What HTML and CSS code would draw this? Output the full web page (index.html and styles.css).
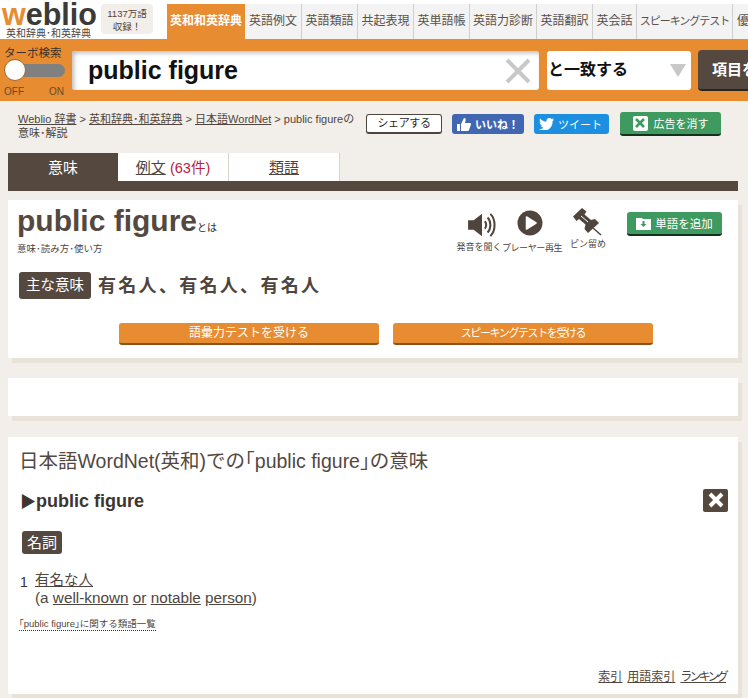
FILE: index.html
```html
<!DOCTYPE html>
<html lang="ja">

<head>
    <meta charset="UTF-8" />
    <title>public figureとは 意味・読み方・使い方</title>
    <link rel="stylesheet" href="styles.css">
</head>

<body>
    <div class="top-row">
        <div class="logo">
            <div class="logo-mark"><span class="logo-w">w</span>eblio</div>
            <div class="logo-sub">英和辞典･和英辞典</div>
        </div>
        <div class="word-count">1137万語<br>収録！</div>
        <nav class="nav-tabs">
            <a class="nav-tab active w78">英和和英辞典</a>
            <a class="nav-tab w57">英語例文</a>
            <a class="nav-tab w56">英語類語</a>
            <a class="nav-tab w56">共起表現</a>
            <a class="nav-tab w56">英単語帳</a>
            <a class="nav-tab w67">英語力診断</a>
            <a class="nav-tab w56">英語翻訳</a>
            <a class="nav-tab w44">英会話</a>
            <a class="nav-tab w96 narrow">スピーキングテスト</a>
            <a class="nav-tab w56 last">優良</a>
        </nav>
    </div>

    <div class="search-bar">
        <div class="turbo">
            <div class="turbo-title">ターボ検索</div>
            <div class="turbo-track"><span class="turbo-knob"></span></div>
            <div class="turbo-labels"><span>OFF</span><span>ON</span></div>
        </div>
        <div class="search-box">
            <span class="search-text">public figure</span>
            <svg class="search-clear" width="26" height="26" viewBox="0 0 26 26">
                <path d="M2 2 L24 24 M24 2 L2 24" stroke="#c8c8c8" stroke-width="4" />
            </svg>
        </div>
        <div class="search-select">
            <span class="select-text">と一致する</span>
            <span class="select-arrow"></span>
        </div>
        <div class="search-btn">項目を検索</div>
    </div>

    <div class="crumb-row">
        <div class="crumbs">
            <a>Weblio 辞書</a> &gt; <a>英和辞典･和英辞典</a> &gt; <a>日本語WordNet</a> &gt; public figureの<br>意味･解説
        </div>
        <a class="btn-share">シェアする</a>
        <a class="btn-social btn-like">
            <svg width="14" height="13" viewBox="0 0 14 13">
                <path fill="#fff" d="M0 6h3v7H0z M4 6 L7 0 C8.5 0 9 1.2 8.6 2.5 L8 5 H13 C14 5 14.2 6 13.8 7 L12 12 C11.8 12.7 11.3 13 10.5 13 H4z" />
            </svg>
            <b>いいね！</b>
        </a>
        <a class="btn-social btn-tweet">
            <svg width="15" height="12" viewBox="0 0 15 12">
                <path fill="#fff" d="M15 1.5 C14.4 1.8 13.9 1.9 13.3 2 C13.9 1.6 14.4 1 14.6 .3 C14 .7 13.4 .9 12.7 1 C11.4 -.4 9 -.3 8 1.2 C7.4 2 7.3 2.9 7.5 3.7 C5 3.6 2.700 2.400 1.100 .5 C.2 2 .7 3.800 2 4.700 C1.500 4.700 1 4.600 .6 4.300 C.6 5.900 1.700 7.200 3.100 7.500 C2.700 7.700 2.200 7.700 1.700 7.600 C2.100 8.900 3.300 9.800 4.700 9.800 C3.300 10.900 1.600 11.400 0 11.200 C6.500 14.800 14 10.800 13.500 3.200 C14.100 2.800 14.600 2.200 15 1.500z" />
            </svg>
            <span>ツイート</span>
        </a>
        <a class="btn-green btn-noad">
            <span class="noad-icon">
                <svg width="10" height="10" viewBox="0 0 10 10">
                    <path d="M1 1 L9 9 M9 1 L1 9" stroke="#3f9a5f" stroke-width="2.600" />
                </svg>
            </span>
            広告を消す
        </a>
    </div>

    <div class="page-tabs">
        <a class="page-tab current">意味</a>
        <a class="page-tab"><u>例文</u> <span class="count">(63件)</span></a>
        <a class="page-tab"><u>類語</u></a>
    </div>
    <div class="page-tabs-line"></div>

    <section class="card card-main">
        <div class="main-top">
            <div class="title-area">
                <h1><span class="title-word">public figure</span><span class="title-towa">とは</span></h1>
                <div class="title-sub">意味･読み方･使い方</div>
            </div>
            <div class="tools">
                <div class="tool tool-sound">
                    <svg width="30" height="26" viewBox="0 0 32 28">
                        <path fill="#4f453d" d="M1 9h6l9-7v24l-9-7H1z" />
                        <path fill="none" stroke="#4f453d" stroke-width="2.200" d="M19 10 C21 12 21 16 19 18 M22 6 C26 10 26 18 22 22 M25 2 C31 8 31 20 25 26" />
                    </svg>
                    <span>発音を聞く</span>
                </div>
                <div class="tool tool-play">
                    <svg width="26" height="26" viewBox="0 0 26 26">
                        <circle cx="13" cy="13" r="12.500" fill="#4f453d" />
                        <path fill="#fff" stroke="#fff" stroke-width="1.500" stroke-linejoin="round" d="M9.500 7 L19 13 L9.500 19z" />
                    </svg>
                    <span class="tool-play-text">プレーヤー再生</span>
                </div>
                <div class="tool tool-pin">
                    <svg width="30" height="28" viewBox="0 0 30 28">
                        <path fill="#4f453d" d="M9 0 L13.500 3.500 L11.500 6.500 L18 12 L22 11 L26 15 L15 25 L11.500 21 L12.500 16.500 L6 11 L3.500 13 L0 8.500z" />
                        <path stroke="#fff" stroke-width="1" d="M8 8 L15 14" />
                        <path stroke="#4f453d" stroke-width="1.500" d="M20 20 L28 27" />
                    </svg>
                    <span>ピン留め</span>
                </div>
            </div>
            <a class="btn-green btn-addword">
                <svg width="15" height="13" viewBox="0 0 15 13">
                    <path fill="#fff" d="M0 1h6l1 1h8v11H0z" />
                    <path fill="#3f9a5f" d="M6.500 4h2v3h2l-3 3-3-3h2z" />
                </svg>
                単語を追加
            </a>
        </div>
        <div class="meaning-row">
            <span class="label">主な意味</span>
            <span class="meaning-text">有名人、有名人、有名人</span>
        </div>
        <div class="test-row">
            <a class="btn-orange">語彙力テストを受ける</a>
            <a class="btn-orange btn-kana">スピーキングテストを受ける</a>
        </div>
    </section>

    <section class="card card-ad"></section>

    <section class="card card-wordnet">
        <h2>日本語WordNet(英和)での｢public figure｣の意味</h2>
        <div class="entry-head">
            <span class="entry-title"><span class="entry-mark">▶</span>public figure</span>
            <span class="close-box">
                <svg width="16" height="16" viewBox="0 0 16 16">
                    <path d="M2 2 L14 14 M14 2 L2 14" stroke="#fff" stroke-width="4" />
                </svg>
            </span>
        </div>
        <span class="label label-pos">名詞</span>
        <div class="sense">
            <span class="sense-num">1</span>
            <div class="sense-body">
                <div class="sense-ja"><a>有名な人</a></div>
                <div class="sense-en">(a <a>well-known</a> <a>or</a> <a>notable</a> <a>person</a>)</div>
            </div>
        </div>
        <a class="related">｢public figure｣に関する類語一覧</a>
        <div class="card-links">
            <a>索引</a>
            <a>用語索引</a>
            <a class="link-kana">ランキング</a>
        </div>
    </section>
</body>

</html>
```
FILE: styles.css
```css
html,
body {
    margin: 0;
    height: 698px;
    overflow: hidden;
}

body {
    width: 748px;
    background-color: #f2eee9;
    color: #4f453d;
    font-family: "Liberation Sans", Arial, "Noto Sans CJK JP", sans-serif;
    font-size: 13px;
}

a {
    color: inherit;
}

.top-row {
    display: flex;
    height: 39px;
    background-color: #fff;
}

.logo {
    width: 101px;
    flex: none;
    padding-left: 2px;
    box-sizing: border-box;
}

.logo-mark {
    height: 27px;
    padding-top: 1px;
    box-sizing: border-box;
    font-size: 30.500px;
    line-height: 26px;
    font-weight: bold;
    color: #3c3a38;
}

.logo-w {
    color: #e78c31;
}

.logo-sub {
    font-size: 10px;
    line-height: 12px;
    padding-left: 4px;
    margin-top: 1px;
    white-space: nowrap;
}

.word-count {
    width: 52px;
    height: 30px;
    flex: none;
    margin-top: 4px;
    background-color: #f2eee9;
    border-radius: 4px;
    font-size: 9.500px;
    line-height: 13px;
    padding-top: 3px;
    box-sizing: border-box;
    text-align: center;
}

.nav-tabs {
    display: flex;
    width: 581px;
    margin: 4px 0 0 14px;
    flex: none;
    overflow: hidden;
}

.nav-tab {
    height: 35px;
    line-height: 35px;
    background-color: #f3f3f3;
    border-right: 1px solid #cfcfcf;
    box-sizing: border-box;
    text-align: center;
    font-size: 12px;
    color: #58514a;
    white-space: nowrap;
    flex: none;
}

.nav-tab.active {
    background-color: #e78c31;
    color: #fff;
    font-weight: bold;
    border-right: none;
}

.nav-tab.narrow {
    font-size: 11px;
    letter-spacing: -1px;
}

.nav-tab.last {
    width: 15px;
    text-align: left;
    padding-left: 4px;
    border-right: none;
    overflow: hidden;
}

.w44 { width: 44px; }
.w56 { width: 56px; }
.w57 { width: 57px; }
.w67 { width: 67px; }
.w78 { width: 78px; }
.w96 { width: 96px; }

.search-bar {
    display: flex;
    height: 62px;
    background-color: #e78c31;
    overflow: hidden;
    box-sizing: border-box;
}

.turbo {
    width: 72px;
    flex: none;
    padding: 7px 0 0 4px;
    box-sizing: border-box;
    color: #3a312a;
}

.turbo-title {
    font-size: 11.500px;
    line-height: 14px;
    white-space: nowrap;
}

.turbo-track {
    position: relative;
    width: 60px;
    height: 13px;
    margin: 4px 0 0 1px;
    background-color: #808080;
    border-radius: 7px;
}

.turbo-knob {
    position: absolute;
    left: -1px;
    top: -5px;
    width: 22px;
    height: 22px;
    background-color: #fff;
    border-radius: 50%;
    border: 1px solid #a36328;
    box-sizing: border-box;
}

.turbo-labels {
    display: flex;
    justify-content: space-between;
    width: 60px;
    margin-top: 9px;
    font-size: 10px;
    line-height: 12px;
    color: #6b4a22;
}

.search-box {
    display: flex;
    align-items: center;
    justify-content: space-between;
    width: 467px;
    height: 39px;
    margin-top: 12px;
    padding: 0 8px 0 16px;
    background-color: #fff;
    border-radius: 3px;
    box-shadow: inset 2px 2px 4px #bbb;
    box-sizing: border-box;
    flex: none;
}

.search-text {
    font-size: 25px;
    font-weight: bold;
    color: #111;
}

.search-select {
    display: flex;
    align-items: center;
    justify-content: space-between;
    width: 144px;
    height: 39px;
    margin: 12px 0 0 8px;
    padding: 0 5px 0 1px;
    background-color: #fff;
    border-radius: 3px;
    box-sizing: border-box;
    font-size: 16px;
    font-weight: bold;
    color: #111;
    flex: none;
}

.select-text {
    padding-bottom: 5px;
}

.select-arrow {
    width: 0;
    height: 0;
    border-left: 8px solid transparent;
    border-right: 8px solid transparent;
    border-top: 13px solid #c8c8c8;
}

.search-btn {
    width: 120px;
    height: 41px;
    margin: 11px 0 0 7px;
    padding-left: 14px;
    line-height: 39px;
    background-color: #54483f;
    border-bottom: 2px solid #2d241d;
    border-radius: 4px;
    box-sizing: border-box;
    color: #fff;
    font-size: 15px;
    font-weight: bold;
    white-space: nowrap;
    flex: none;
}

.crumb-row {
    display: flex;
    align-items: flex-start;
    height: 52px;
    padding: 11px 0 0 18px;
    box-sizing: border-box;
}

.crumbs {
    width: 340px;
    flex: none;
    font-size: 11px;
    line-height: 14px;
    color: #4f453d;
    white-space: nowrap;
}

.crumbs a {
    text-decoration: underline;
}

.btn-share {
    width: 76px;
    height: 20px;
    margin: 2px 0 0 8px;
    border: 1px solid #4f453d;
    border-bottom-width: 2px;
    border-radius: 3px;
    background-color: #fff;
    box-sizing: border-box;
    text-align: center;
    font-size: 11px;
    letter-spacing: -0.4px;
    line-height: 17px;
    color: #2e2924;
    flex: none;
}

.btn-social {
    display: flex;
    align-items: center;
    justify-content: center;
    gap: 4px;
    height: 20px;
    margin-top: 2px;
    border-radius: 3px;
    color: #fff;
    font-size: 11px;
    box-sizing: border-box;
    flex: none;
}

.btn-like {
    width: 72px;
    margin-left: 10px;
    background-color: #4267b2;
}

.btn-tweet {
    width: 75px;
    margin-left: 10px;
    padding-right: 2px;
    background-color: #1d8fe1;
}

.btn-green {
    display: flex;
    align-items: center;
    justify-content: center;
    background-color: #3f9a5f;
    border-bottom: 2px solid #16301f;
    border-radius: 3px;
    box-sizing: border-box;
    color: #fff;
    flex: none;
}

.btn-noad {
    gap: 6px;
    width: 101px;
    height: 24px;
    margin: 0 0 0 11px;
    font-size: 11px;
}

.noad-icon {
    display: flex;
    align-items: center;
    justify-content: center;
    width: 15px;
    height: 15px;
    background-color: #fff;
    border-radius: 2px;
}

.page-tabs {
    display: flex;
    height: 28px;
    margin-left: 8px;
}

.page-tab {
    width: 111px;
    height: 28px;
    line-height: 30px;
    background-color: #fff;
    border-right: 1px solid #d8d3cd;
    box-sizing: border-box;
    text-align: center;
    font-size: 15px;
}

.page-tab.current {
    width: 110px;
    background-color: #54483f;
    color: #fff;
    border-right: none;
}

.count {
    color: #b8203c;
    font-size: 14.500px;
}

.page-tabs-line {
    width: 730px;
    height: 10px;
    margin-left: 8px;
    background-color: #54483f;
}

.card {
    width: 730px;
    margin: 9px 0 0 8px;
    background-color: #fff;
    box-shadow: 4px 5px 0 #e8e2d8;
    box-sizing: border-box;
}

.card-main {
    height: 158px;
    padding: 0 9px;
}

.main-top {
    display: flex;
    height: 66px;
}

.title-area {
    width: 439px;
    flex: none;
}

h1 {
    margin: 3px 0 0;
    font-size: 30px;
    line-height: 36px;
    font-weight: bold;
    color: #54483f;
    white-space: nowrap;
}

.title-towa {
    font-size: 10px;
    font-weight: normal;
    color: #2e2924;
}

.title-sub {
    margin-top: -3px;
    font-size: 9.500px;
    line-height: 12px;
}

.tools {
    display: flex;
    width: 158px;
    flex: none;
    font-size: 9px;
    white-space: nowrap;
}

.tool {
    display: flex;
    flex-direction: column;
    align-items: center;
    gap: 2px;
}

.tool span {
    line-height: 12px;
}

.tool-sound {
    width: 46px;
    padding-top: 12px;
    gap: 3px;
}

.tool-sound svg {
    margin-left: 6px;
}

.tool-play {
    width: 60px;
    padding-top: 10px;
    gap: 6px;
}

.tool-play svg {
    margin-right: 4px;
}

.tool-play-text {
    letter-spacing: -0.4px;
}

.tool-pin {
    width: 52px;
    padding-top: 8px;
}

.btn-addword {
    gap: 4px;
    width: 95px;
    height: 24px;
    margin: 12px 0 0 13px;
    font-size: 11.500px;
}

.meaning-row {
    display: flex;
    align-items: center;
    gap: 7px;
    margin: 6px 0 0 2px;
}

.label {
    display: inline-block;
    background-color: #54483f;
    border-radius: 3px;
    color: #fff;
    text-align: center;
}

.meaning-row .label {
    width: 72px;
    height: 27px;
    line-height: 27px;
    font-size: 14.500px;
}

.meaning-text {
    margin-top: -4px;
    font-size: 18px;
    font-weight: bold;
    letter-spacing: 2.3px;
    color: #4f453d;
}

.test-row {
    display: flex;
    gap: 14px;
    margin: 24px 0 0 102px;
}

.btn-orange {
    width: 260px;
    height: 22px;
    background-color: #e78c31;
    border-bottom: 2px solid #8a5418;
    border-radius: 3px;
    box-sizing: border-box;
    text-align: center;
    color: #fff;
    font-size: 12px;
    line-height: 20px;
}

.btn-kana {
    font-size: 11px;
    letter-spacing: -1.4px;
}

.card-ad {
    height: 38px;
    margin-top: 20px;
}

.card-wordnet {
    position: relative;
    height: 257px;
    margin-top: 21px;
    padding: 12px 12px 0 12px;
}

h2 {
    margin: 0 0 0 -1px;
    font-size: 19.500px;
    line-height: 24px;
    font-weight: normal;
    color: #54483f;
    white-space: nowrap;
}

.entry-head {
    display: flex;
    align-items: center;
    justify-content: space-between;
    height: 24px;
    margin-top: 15px;
    margin-left: 2px;
}

.entry-title {
    font-size: 18px;
    font-weight: bold;
    color: #3c3530;
}

.entry-mark {
    margin-left: -2px;
    font-size: 16px;
}

.close-box {
    display: flex;
    align-items: center;
    justify-content: center;
    width: 25px;
    height: 23px;
    margin-right: -2px;
    background-color: #54483f;
    border-radius: 2px;
}

.label-pos {
    display: block;
    width: 40px;
    height: 23px;
    line-height: 23px;
    margin: 19px 0 0 2px;
    font-size: 15px;
}

.sense {
    display: flex;
    margin-top: 17px;
}

.sense-num {
    width: 15px;
    margin-top: 3px;
    font-size: 14px;
    line-height: 16px;
    color: #333;
}

.sense-ja,
.sense-en {
    font-size: 14.500px;
    line-height: 18px;
}

.sense-en {
    font-size: 15.300px;
}

.sense a {
    text-decoration: underline;
}

.related {
    display: inline-block;
    margin-top: 11px;
    margin-left: -1px;
    font-size: 9.500px;
    line-height: 12px;
    border-bottom: 1px dotted #333;
}

.card-links {
    position: absolute;
    right: 12px;
    bottom: 10px;
    display: flex;
    gap: 5px;
    font-size: 12px;
    line-height: 14px;
}

.card-links a {
    text-decoration: underline;
}

.card-links .link-kana {
    letter-spacing: -2.8px;
}
```
